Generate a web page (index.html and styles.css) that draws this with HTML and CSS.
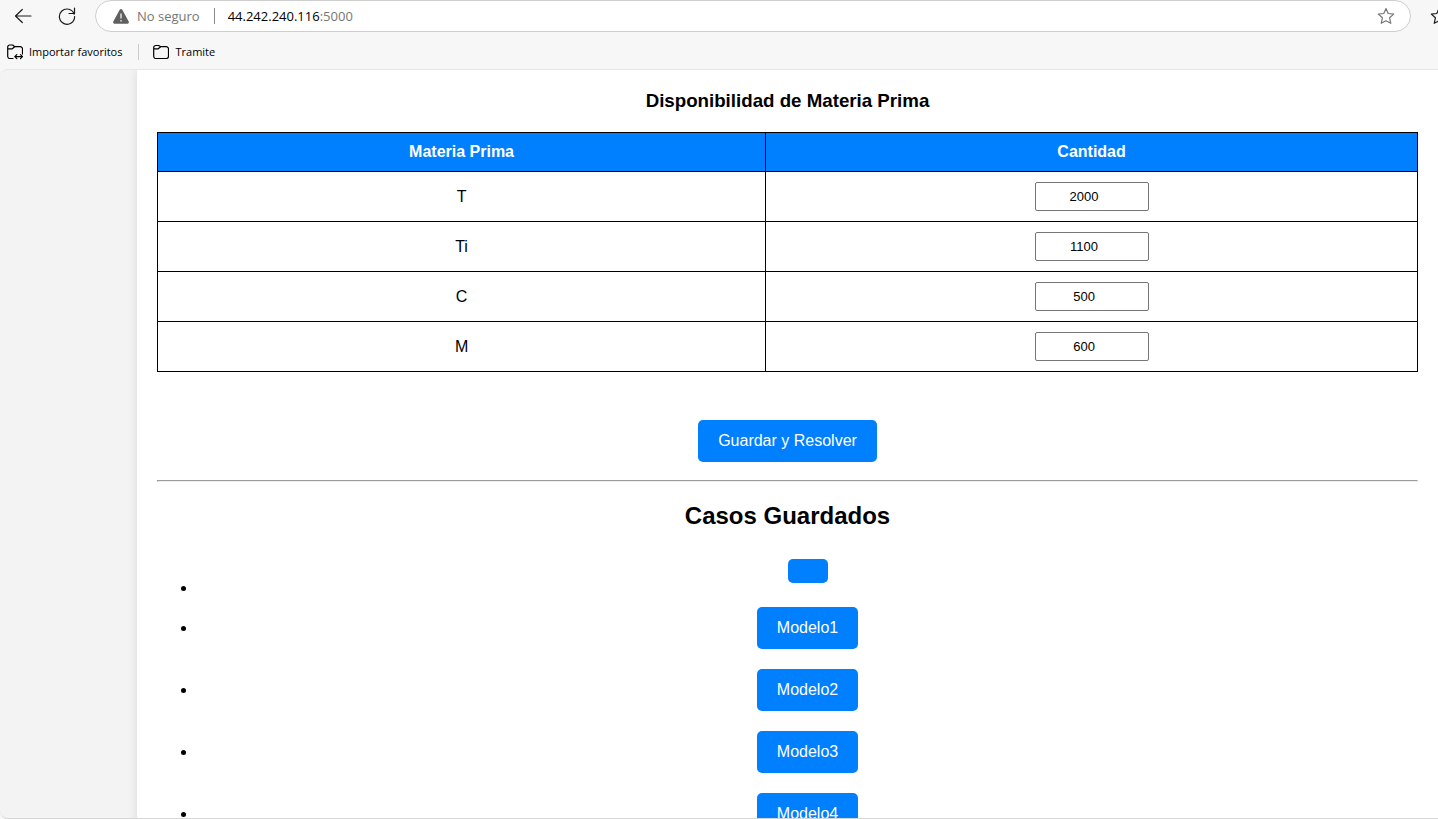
FILE: index.html
```html
<!DOCTYPE html>
<html lang="es">
<head>
<meta charset="utf-8">
<meta name="viewport" content="width=device-width, initial-scale=1">
<title>Disponibilidad de Materia Prima</title>
<link rel="stylesheet" href="styles.css">
</head>
<body>
<header class="browser">
  <div class="toolbar">
    <button class="icon-button" type="button" aria-label="Atrás"><svg width="18" height="18" viewBox="0 0 18 18"><path d="M17 9H2M8.300 2.500 1.500 9l6.800 6.500"/></svg></button>
    <button class="icon-button" type="button" aria-label="Actualizar"><svg width="18" height="18" viewBox="0 0 18 18"><path d="M16.200 7.200A7.600 7.600 0 1 0 16.600 9.500M16.500 1v5.500H11"/></svg></button>
    <div class="address">
      <svg class="warning" width="16" height="15" viewBox="0 0 16 15"><path class="warning-shape" d="M6.700.8a1.500 1.500 0 0 1 2.600 0l6.400 11.800a1.400 1.400 0 0 1-1.200 2.100h-13a1.400 1.400 0 0 1-1.200-2.100z"/><path class="warning-mark" d="M8 4.500v5M8 11v1.600"/></svg>
      <span class="security">No seguro</span>
      <span class="address-divider"></span>
      <span class="url">44.242.240.116<span class="port">:5000</span></span>
      <button class="icon-button star" type="button" aria-label="Agregar a favoritos"><svg width="18" height="18" viewBox="0 0 18 18"><path d="m9 1.500 2.200 5 5.500.6-4.100 3.700 1.200 5.500L9 13.800l-4.800 2.500 1.200-5.500-4.100-3.700 5.500-.6z"/></svg></button>
    </div>
    <button class="icon-button favorites" type="button" aria-label="Favoritos"><svg width="18" height="18" viewBox="0 0 18 18"><path d="m9 1.500 2.200 5 5.500.6-4.100 3.700 1.200 5.500L9 13.800l-4.800 2.500 1.200-5.500-4.100-3.700 5.500-.6z"/></svg></button>
  </div>
  <nav class="bookmarks">
    <a class="bookmark" href="#"><svg width="16" height="16" viewBox="0 0 16 16"><path d="M6 14.500H3a2.300 2.300 0 0 1-2.300-2.300V3A2 2 0 0 1 2.700 1h3l2 1.700h5.500A2.300 2.300 0 0 1 15.500 5v5M.7 4.800h4.500L7.700 2.700M8 12.700h7.300M9.800 10.700l-2 2 2 2M13.500 10.700l2 2-2 2"/></svg>Importar favoritos</a>
    <span class="bookmark-divider"></span>
    <a class="bookmark" href="#"><svg width="16" height="16" viewBox="0 0 16 16"><path d="M.7 4.800h4.500L7.700 2.700h5.500A2.300 2.300 0 0 1 15.500 5v7.200a2.300 2.300 0 0 1-2.300 2.300H3a2.300 2.300 0 0 1-2.300-2.300V3.500A2 2 0 0 1 2.700 1.500h3l2 1.200"/></svg>Tramite</a>
  </nav>
</header>
<div class="viewport">
  <main class="card">
    <form>
      <h3 class="subtitle">Disponibilidad de Materia Prima</h3>
      <table class="materials">
        <thead>
          <tr><th scope="col">Materia Prima</th><th scope="col">Cantidad</th></tr>
        </thead>
        <tbody>
          <tr><td><label for="qty-t">T</label></td><td><input id="qty-t" type="number" value="2000"></td></tr>
          <tr><td><label for="qty-ti">Ti</label></td><td><input id="qty-ti" type="number" value="1100"></td></tr>
          <tr><td><label for="qty-c">C</label></td><td><input id="qty-c" type="number" value="500"></td></tr>
          <tr><td><label for="qty-m">M</label></td><td><input id="qty-m" type="number" value="600"></td></tr>
        </tbody>
      </table>
      <button class="action" type="submit">Guardar y Resolver</button>
    </form>
    <hr>
    <h2 class="title">Casos Guardados</h2>
    <ul class="cases">
      <li><a class="action" href="#" aria-label="Caso sin nombre"></a></li>
      <li><a class="action" href="#">Modelo1</a></li>
      <li><a class="action" href="#">Modelo2</a></li>
      <li><a class="action" href="#">Modelo3</a></li>
      <li><a class="action" href="#">Modelo4</a></li>
    </ul>
  </main>
</div>
</body>
</html>
```
FILE: styles.css
```css
* { box-sizing: border-box; }

body {
  display: flex;
  flex-direction: column;
  height: 100vh;
  margin: 0;
  overflow: hidden;
  background: #f7f7f7;
  color: #000;
  font-family: "Liberation Sans", Arial, sans-serif;
  font-size: 16px;
}

svg {
  display: block;
  flex: none;
  fill: none;
  stroke: currentColor;
  stroke-width: 1.2;
  stroke-linecap: round;
  stroke-linejoin: round;
}

.browser {
  flex: none;
  font-family: "Open Sans", "Noto Sans", sans-serif;
}

.toolbar {
  display: flex;
  align-items: center;
  height: 32px;
  padding-left: 14px;
  overflow: hidden;
}

.icon-button {
  flex: none;
  padding: 0;
  border: 0;
  background: none;
  color: #1b1b1b;
}

.icon-button + .icon-button { margin-left: 26px; }

.address {
  display: flex;
  flex: 1;
  align-items: center;
  height: 32px;
  margin-left: 19px;
  padding: 0 15px 0 17px;
  border: 1px solid #cecece;
  border-radius: 16px;
  background: #fff;
  font-size: 13px;
}

.warning { margin-right: 8px; }
.warning-shape { fill: #606060; stroke: none; }
.warning-mark { stroke: #fff; stroke-linecap: butt; }
.security, .port { color: #767676; }

.address-divider {
  width: 1px;
  height: 16px;
  margin: 0 13px 0 14px;
  background: #8a8a8a;
}

.star { margin-left: auto; color: #767676; }
.favorites { margin: 0 -10px 0 19px; }

.bookmarks {
  display: flex;
  align-items: center;
  height: 37px;
  padding: 2px 7px 0;
  font-size: 11px;
}

.bookmark {
  display: flex;
  align-items: center;
  gap: 6px;
  color: #000;
  text-decoration: none;
}

.bookmark-divider {
  width: 1px;
  height: 16px;
  margin: 0 14px 0 16px;
  background: #ccc;
}

.viewport {
  flex: 1;
  min-height: 0;
  padding-left: 137px;
  overflow: hidden;
  border-top: 1px solid #e6e6e6;
  border-bottom: 1px solid #d6d6d6;
  border-radius: 8px 0 0 8px;
  background: #f3f3f3;
}

.card {
  padding: 20px;
  background: #fff;
  box-shadow: 0 0 10px rgba(0, 0, 0, 0.1);
  text-align: center;
}

.subtitle {
  margin: 0 0 20px;
  line-height: 22px;
}

.materials {
  width: 100%;
  margin-bottom: 38px;
  border-collapse: collapse;
}

.materials th,
.materials td {
  padding: 10px;
  border: 1px solid #000;
}

.materials th {
  background: #007fff;
  color: #fff;
}

.materials input {
  width: 114px;
  height: 29px;
  padding: 5px;
  border: 1px solid #767676;
  border-radius: 2px;
  font-family: inherit;
  font-size: 13px;
  text-align: center;
}

.action {
  display: inline-block;
  margin: 10px 0;
  padding: 12px 20px;
  border: 0;
  border-radius: 5px;
  background: #007fff;
  color: #fff;
  font-family: inherit;
  font-size: 16px;
  text-decoration: none;
  cursor: pointer;
}

hr { margin: 8px 0 20px; }

.title {
  margin: 0 0 20px;
  font-size: 24px;
  line-height: 27px;
}

.cases {
  margin: 0;
  padding-left: 40px;
}
```
